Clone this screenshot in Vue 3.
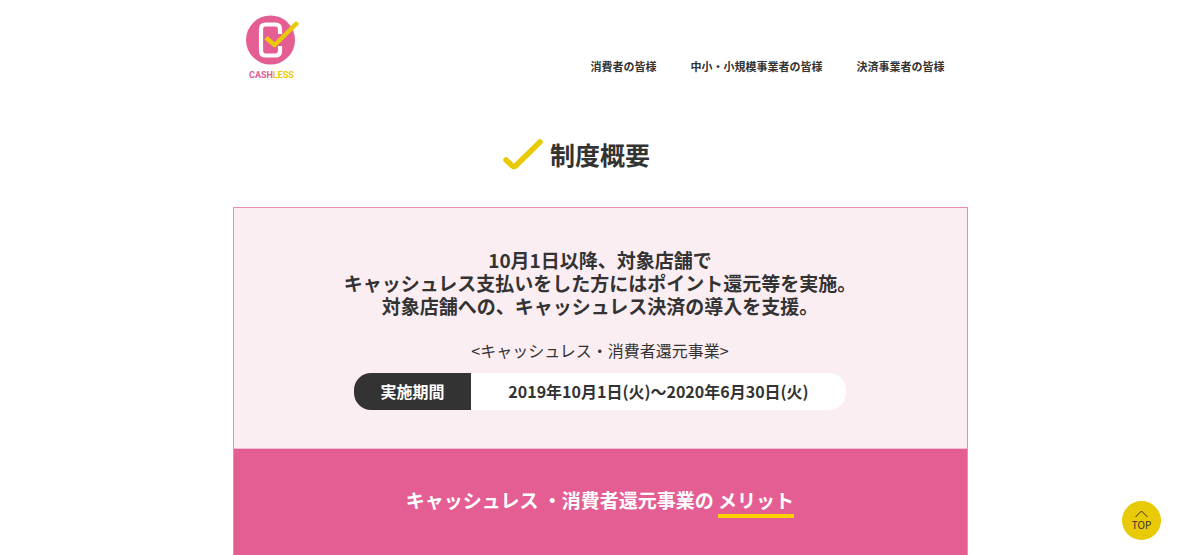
<script setup>
const navLinks = ['消費者の皆様', '中小・小規模事業者の皆様', '決済事業者の皆様']
</script>

<template>
  <div class="page">
    <header class="header">
      <a href="#" class="logo" aria-label="CASHLESS">
        <svg width="54" height="66" viewBox="0 0 54 66">
          <circle cx="24.500" cy="25" r="24.500" fill="#e45e94" />
          <path d="M34 19V14q0-4.500-4.500-4.500h-10q-4.500 0-4.500 4.500v22q0 4.500 4.500 4.500h10q4.500 0 4.500-4.500v-5" fill="none" stroke="#fff" stroke-width="4.200" />
          <path d="M21.500 24l7 6.200L50 9" fill="none" stroke="#e9ca06" stroke-width="4.400" stroke-linejoin="round" stroke-linecap="square" />
          <text x="3" y="63" class="logo-text"><tspan fill="#e45e94">CASH</tspan><tspan fill="#e9ca06">LESS</tspan></text>
        </svg>
      </a>
      <nav class="nav">
        <a v-for="item in navLinks" :key="item" href="#">{{ item }}</a>
      </nav>
    </header>

    <main>
      <h1 class="title">
        <svg width="40" height="32" viewBox="0 0 40 32" aria-hidden="true">
          <path d="M3 22l6.500 6q1.500 1.300 3 0L37 4" fill="none" stroke="#e9ca06" stroke-width="5.500" stroke-linecap="round" stroke-linejoin="round" />
        </svg>
        <span>制度概要</span>
      </h1>

      <div class="panel">
        <section class="summary">
          <p class="lead">10月1日以降、対象店舗で<br>キャッシュレス支払いをした方にはポイント還元等を実施。<br>対象店舗への、キャッシュレス決済の導入を支援。</p>
          <p class="program">&lt;キャッシュレス・消費者還元事業&gt;</p>
          <dl class="period">
            <dt>実施期間</dt>
            <dd>2019年10月1日(火)～2020年6月30日(火)</dd>
          </dl>
        </section>
        <section class="merit">
          <h2>キャッシュレス ・消費者還元事業の <span>メリット</span></h2>
        </section>
      </div>
    </main>

    <a href="#" class="to-top">
      <svg width="13" height="8" viewBox="0 0 13 8" aria-hidden="true">
        <path d="M.5 7l6-6 6 6" fill="none" stroke="#333" stroke-width="1" />
      </svg>
      <span>TOP</span>
    </a>
  </div>
</template>

<style>
body {
  margin: 0;
  background: #fff;
}
</style>

<style scoped>
.page {
  font-family: "Noto Sans CJK JP", sans-serif;
  color: #333;
  max-width: 735px;
  margin: 0 auto;
}
.header {
  display: flex;
  justify-content: space-between;
  align-items: flex-end;
  padding: 15px 23px 0 13px;
}
.logo svg {
  display: block;
}
.logo-text {
  font: bold 9px Roboto, "Liberation Sans", sans-serif;
}
.nav {
  display: flex;
  gap: 34px;
  padding-bottom: 7px;
}
.nav a {
  color: #333;
  text-decoration: none;
  font-size: 11px;
  line-height: 16px;
  font-weight: 700;
}
.title {
  display: flex;
  justify-content: center;
  align-items: center;
  gap: 7px;
  margin: 54px 47px 34px 0;
  font-size: 25px;
  line-height: 38px;
  font-weight: 700;
}
.panel {
  border: 1px solid #e88fb0;
  border-bottom: 0;
}
.summary {
  padding: 40px 16px 38px;
  background: #fbeef3;
  border-bottom: 1px solid #f4bdd2;
  text-align: center;
}
.lead {
  margin: 0;
  font-size: 19px;
  line-height: 23px;
  font-weight: 700;
}
.program {
  margin: 21px 0 11px;
  font-size: 16px;
  line-height: 24px;
}
.period {
  display: flex;
  max-width: 492px;
  margin: 0 auto;
  border-radius: 17px;
  overflow: hidden;
  background: #fff;
  font-size: 16px;
  line-height: 37px;
}
.period dt {
  flex: 0 0 117px;
  background: #333;
  color: #fff;
  font-weight: 700;
}
.period dd {
  flex: 1;
  margin: 0;
  font-weight: 700;
}
.merit {
  padding: 35px 16px 37px;
  background: #e45e94;
  text-align: center;
}
.merit h2 {
  margin: 0;
  color: #fff;
  font-size: 19px;
  line-height: 32px;
  font-weight: 700;
}
.merit h2 span {
  display: inline-block;
  line-height: 28px;
  border-bottom: 4px solid #fbd303;
}
.to-top {
  position: fixed;
  right: 39px;
  bottom: 15px;
  width: 39px;
  height: 39px;
  border-radius: 50%;
  background: #e9ca06;
  color: #333;
  text-decoration: none;
  display: flex;
  flex-direction: column;
  align-items: center;
  justify-content: center;
  font-size: 10px;
  line-height: 14px;
}
</style>
